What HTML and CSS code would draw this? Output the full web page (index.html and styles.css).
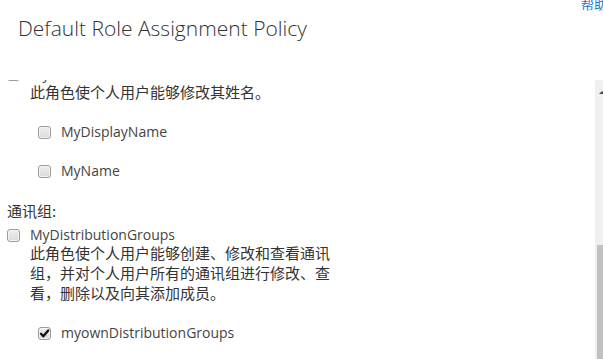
FILE: index.html
```html
<!DOCTYPE html>
<html lang="zh-CN">
<head>
<meta charset="utf-8">
<title>Default Role Assignment Policy</title>
<link rel="stylesheet" href="styles.css">
</head>
<body>
<div class="page">
  <header class="header">
    <h1 class="title">Default Role Assignment Policy</h1>
    <a class="help" href="#">帮助</a>
  </header>
  <div class="main">
    <div class="content">
      <div class="inner">
        <div class="role-row">
          <span class="box"></span>
          <span class="label">MyProfileInformation</span>
        </div>
        <div class="desc">此角色使个人用户能够修改其姓名。</div>
        <div class="sub-list">
          <div class="sub-row"><span class="box"></span><span class="label">MyDisplayName</span></div>
          <div class="sub-row"><span class="box"></span><span class="label">MyName</span></div>
        </div>

        <div class="group-heading">通讯组:</div>
        <div class="role-row">
          <span class="box"></span>
          <span class="label">MyDistributionGroups</span>
        </div>
        <div class="desc">此角色使个人用户能够创建、修改和查看通讯组，并对个人用户所有的通讯组进行修改、查看，删除以及向其添加成员。</div>
        <div class="sub-list">
          <div class="sub-row">
            <span class="box checked"><svg viewBox="0 0 13 13" width="13" height="13"><path d="M3 6.8 L5.3 9.3 L10.2 3.4" fill="none" stroke="#111" stroke-width="2.3" stroke-linecap="round" stroke-linejoin="round"/></svg></span>
            <span class="label">myownDistributionGroups</span>
          </div>
        </div>
      </div>
    </div>
    <div class="scrollbar">
      <span class="arrow"></span>
      <span class="thumb"></span>
    </div>
  </div>
</div>
</body>
</html>
```

FILE: styles.css
```css
html, body {
  margin: 0;
  padding: 0;
  background: #fff;
}
body {
  width: 603px;
  height: 359px;
  overflow: hidden;
  font-family: "Open Sans", "Noto Sans CJK SC", sans-serif;
  color: #333;
}
.page {
  display: flex;
  flex-direction: column;
  height: 359px;
}
.header {
  height: 80px;
  display: flex;
  justify-content: space-between;
  align-items: flex-start;
  flex-shrink: 0;
}
.title {
  margin: 14px 0 0 18px;
  font-family: "Open Sans", sans-serif;
  font-weight: 300;
  font-size: 21px;
  line-height: 28px;
  color: #333;
}
.help {
  font-family: "Noto Sans CJK SC", sans-serif;
  font-size: 13px;
  line-height: 13px;
  color: #1b78cc;
  text-decoration: none;
  margin-top: -3px;
  margin-right: -4px;
  white-space: nowrap;
}
.main {
  flex: 1;
  display: flex;
  min-height: 0;
}
.content {
  flex: 1;
  overflow: hidden;
}
.inner {
  margin-top: -14px;
  padding-left: 7px;
}
.role-row, .sub-row {
  display: flex;
  align-items: center;
  gap: 9px;
}
.role-row {
  height: 16px;
}
.sub-row {
  height: 20px;
}
.sub-list {
  padding-left: 31px;
  margin: 20px 0;
  display: flex;
  flex-direction: column;
  gap: 19px;
}
.box {
  width: 13px;
  height: 13px;
  box-sizing: border-box;
  border: 1px solid #9c9c9c;
  border-radius: 3px;
  background: linear-gradient(#eeeeee, #d9d9d9);
  box-shadow: inset 0 0 0 1px #f4f4f4;
  flex-shrink: 0;
  position: relative;
}
.box svg {
  position: absolute;
  left: -1px;
  top: -1px;
}
.label {
  font-family: "Open Sans", sans-serif;
  font-size: 14px;
  line-height: 20px;
  color: #444;
  padding-left: 1px;
}
.desc {
  font-family: "Noto Sans CJK SC", sans-serif;
  font-size: 15px;
  line-height: 20px;
  color: #333;
  padding-left: 23px;
  width: 305px;
}
.group-heading {
  font-family: "Noto Sans CJK SC", sans-serif;
  font-size: 15px;
  line-height: 20px;
  color: #333;
  margin-bottom: 6px;
}
.scrollbar {
  width: 8px;
  background: #f0f0f0;
  display: flex;
  flex-direction: column;
  justify-content: space-between;
  align-items: flex-end;
}
.arrow {
  width: 0;
  height: 0;
  margin-top: 11px;
  margin-right: -2px;
  border-left: 3px solid transparent;
  border-right: 3px solid transparent;
  border-bottom: 3px solid #4a4a4a;
}
.thumb {
  width: 6px;
  height: 114px;
  background: #c1c1c1;
}
```
